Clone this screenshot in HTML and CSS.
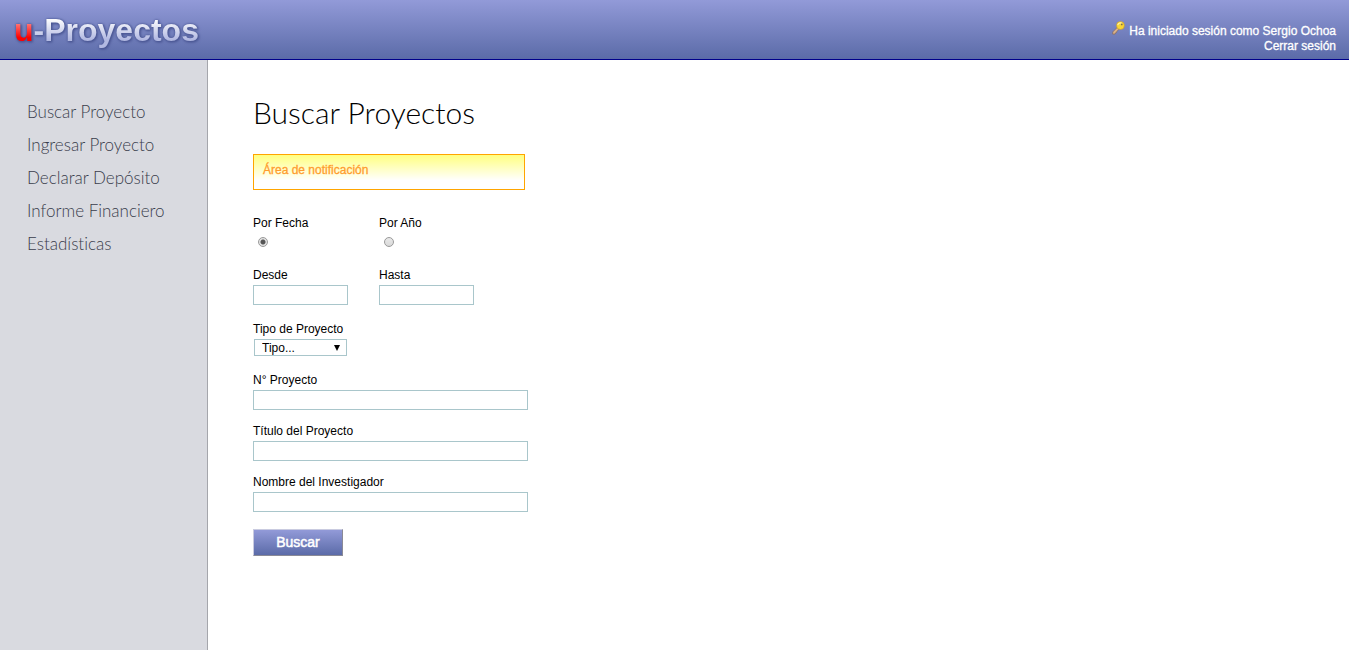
FILE: index.html
```html
<!DOCTYPE html>
<html lang="es">
<head>
<meta charset="utf-8">
<meta name="viewport" content="width=device-width, initial-scale=1">
<title>u-Proyectos</title>
<link rel="stylesheet" href="styles.css">
</head>
<body>
<header class="topbar">
  <div class="logo"><span class="logo-u">u</span><span class="logo-name">-Proyectos</span></div>
  <div class="session">
    <div class="session-user">
      <svg class="key" viewBox="0 0 16 16" aria-hidden="true">
        <path d="M8.200 6.300 2 12.500V15h2.400l.6-1.400 1.300-.4.500-1.400 3-3z" fill="#d8b08a" stroke="#76583f" stroke-width=".6"/>
        <circle cx="10.800" cy="5.200" r="4.500" fill="#f8d636" stroke="#c0922a" stroke-width=".6"/>
        <path d="M7.700 4.600a3.300 3.300 0 0 1 4.800-2" fill="none" stroke="#fff3a0" stroke-width="1.400"/>
        <circle cx="12.300" cy="3.900" r="1" fill="#7c6a55"/>
      </svg>
      <span>Ha iniciado sesión como Sergio Ochoa</span>
    </div>
    <a class="logout" href="#">Cerrar sesión</a>
  </div>
</header>
<div class="layout">
  <nav class="sidebar">
    <a href="#">Buscar Proyecto</a>
    <a href="#">Ingresar Proyecto</a>
    <a href="#">Declarar Depósito</a>
    <a href="#">Informe Financiero</a>
    <a href="#">Estadísticas</a>
  </nav>
  <main class="content">
    <h1>Buscar Proyectos</h1>
    <div class="notice" role="status">Área de notificación</div>
    <form class="search">
      <div class="group dates">
        <div class="field"><label for="por-fecha">Por Fecha</label><input class="radio" type="radio" name="modo" id="por-fecha" checked></div>
        <div class="field"><label for="por-ano">Por Año</label><input class="radio" type="radio" name="modo" id="por-ano"></div>
        <div class="field"><label for="desde">Desde</label><input class="text" type="text" id="desde"></div>
        <div class="field"><label for="hasta">Hasta</label><input class="text" type="text" id="hasta"></div>
      </div>
      <div class="field">
        <label for="tipo">Tipo de Proyecto</label>
        <div class="select-wrap">
          <select id="tipo"><option>Tipo...</option></select>
          <svg class="arrow" viewBox="0 0 6 6" aria-hidden="true"><path d="M0 0h6L3 6z"/></svg>
        </div>
      </div>
      <div class="group">
        <div class="field"><label for="numero">N° Proyecto</label><input class="text" type="text" id="numero"></div>
        <div class="field"><label for="titulo">Título del Proyecto</label><input class="text" type="text" id="titulo"></div>
        <div class="field"><label for="nombre">Nombre del Investigador</label><input class="text" type="text" id="nombre"></div>
      </div>
      <button class="submit" type="submit">Buscar</button>
    </form>
  </main>
</div>
</body>
</html>
```
FILE: styles.css
```css
* { box-sizing: border-box; }

body {
  margin: 0;
  min-height: 100vh;
  display: flex;
  flex-direction: column;
  background: #fff;
  color: #000;
  font: 12px/14px "Liberation Sans", Arial, sans-serif;
}

a { color: inherit; text-decoration: none; }

.topbar {
  display: flex;
  justify-content: space-between;
  padding: 11px 13px 5px 14px;
  background: linear-gradient(#929ad8, #5b6ba8);
  border-bottom: 1px solid #00008b;
}

.logo {
  font-size: 32px;
  line-height: 38px;
  font-weight: bold;
  filter: drop-shadow(0 0 1px #4d5a98) drop-shadow(1px 1px 1px #46528f);
}

.logo-u,
.logo-name {
  display: inline-block;
  color: transparent;
  -webkit-background-clip: text;
  background-clip: text;
}

.logo-u { background-image: linear-gradient(#ff8080 30%, #f00 70%); }
.logo-name { background-image: linear-gradient(#fff 20%, #b2b9e2 75%); }

.session {
  display: flex;
  flex-direction: column;
  align-items: flex-end;
  padding-top: 11px;
  color: #fff;
  line-height: 15px;
  -webkit-text-stroke: 0.3px #fff;
}

.session-user { display: flex; gap: 4px; padding-top: 2px; }
.key { width: 14px; height: 14px; margin-top: -3px; }

.layout { flex: 1; display: flex; }

.sidebar {
  flex: none;
  width: 208px;
  padding: 42px 27px;
  display: flex;
  flex-direction: column;
  gap: 13px;
  background: #d9dae0;
  border-right: 1px solid #a5a6ac;
  color: #3a3d4c;
  font: 300 17px/20px Lato, sans-serif;
  font-variant-ligatures: none;
}

.content { flex: 1; padding: 35px 45px; }

h1 {
  margin: 0 0 25px;
  font: 300 30px/34px Lato, sans-serif;
}

.notice {
  max-width: 272px;
  padding: 8px 9px 12px;
  border: 1px solid orange;
  background: linear-gradient(#ffff80, #fff 75%);
  color: #ff9d2e;
  -webkit-text-stroke: 0.3px #ff9d2e;
}

.search {
  max-width: 275px;
  margin-top: 26px;
  display: flex;
  flex-direction: column;
  align-items: stretch;
  gap: 17px;
}

.group { display: grid; gap: 14px; }
.dates { grid-template-columns: 95px 95px; column-gap: 31px; }
.field { display: flex; flex-direction: column; align-items: flex-start; gap: 3px; }

.text {
  width: 100%;
  height: 20px;
  padding: 1px 4px;
  border: 1px solid #a9c6cb;
  background: #fff;
  font: inherit;
}

.radio {
  appearance: none;
  width: 10px;
  height: 10px;
  margin: 4px 5px 7px;
  border: 1px solid #9a9a9a;
  border-radius: 50%;
  background: linear-gradient(#e9e9e9, #d9d9d9);
}

.radio:checked { background: radial-gradient(circle, #555 0 2px, #e2e2e2 3px); }

.select-wrap { display: grid; align-items: center; width: 93px; margin-left: 1px; }

select {
  grid-area: 1 / 1;
  appearance: none;
  height: 17px;
  padding: 0 7px;
  border: 1px solid #a9c6cb;
  border-radius: 0;
  background: #fff;
  color: #000;
  font: inherit;
}

.arrow {
  grid-area: 1 / 1;
  justify-self: end;
  width: 6px;
  height: 6px;
  margin-right: 7px;
  pointer-events: none;
}

.submit {
  align-self: flex-start;
  width: 90px;
  height: 27px;
  padding: 0 0 2px;
  border: 1px solid;
  border-color: #c9cbe0 #8a8a96 #8a8a96 #c9cbe0;
  background: linear-gradient(#929ad8, #5b6ba8);
  color: #fff;
  font: 14px/18px "Liberation Sans", Arial, sans-serif;
  -webkit-text-stroke: 0.5px #fff;
}
```
